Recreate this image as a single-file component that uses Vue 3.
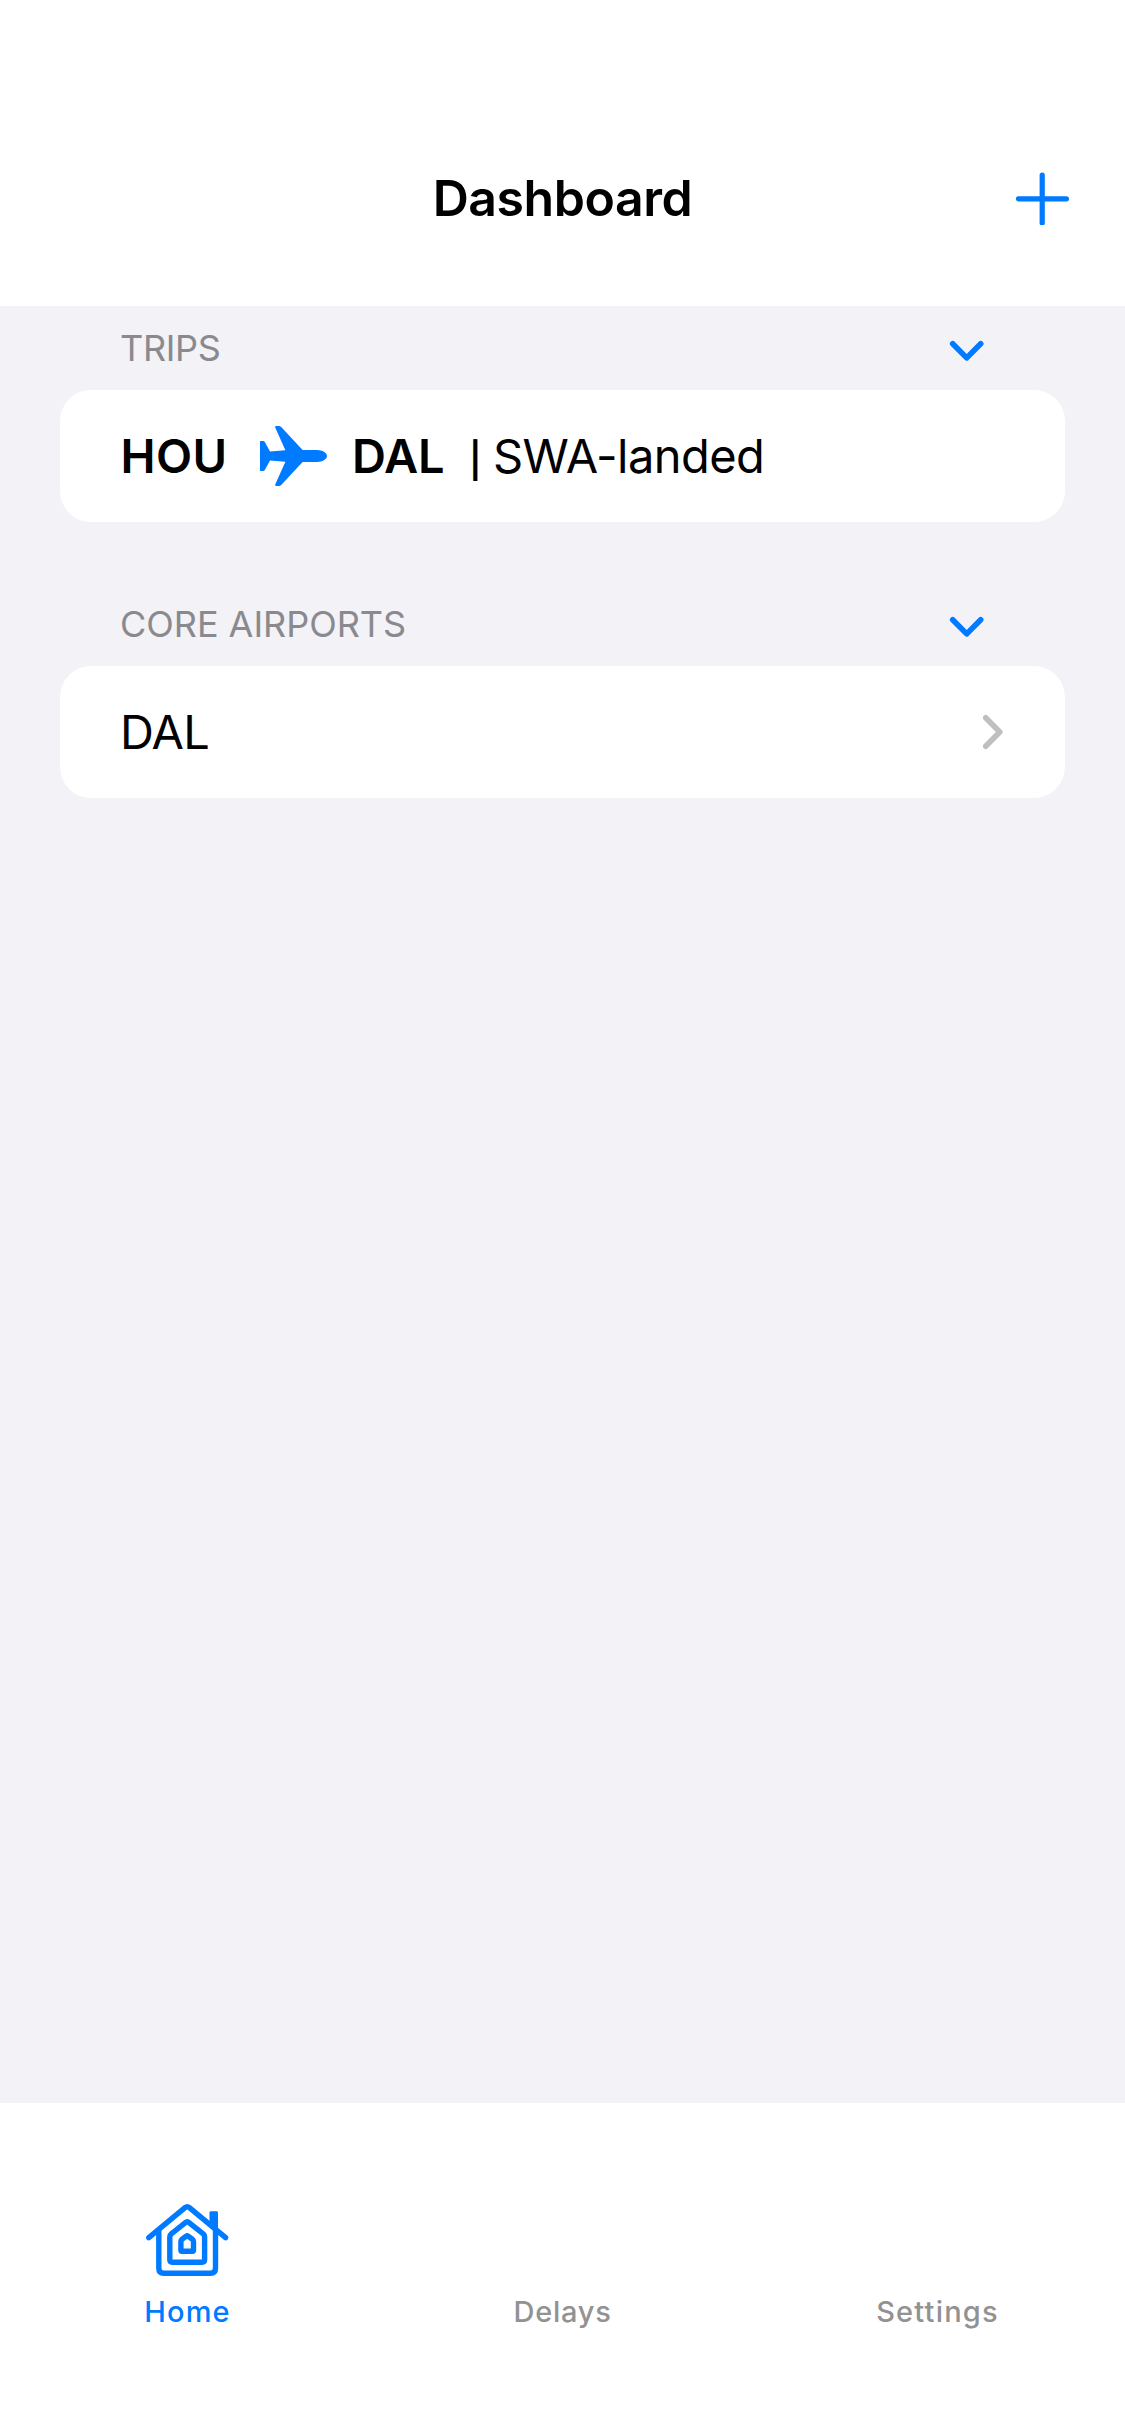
<script setup>
const tabs = [
  { id: 'home', label: 'Home', active: true },
  { id: 'delays', label: 'Delays', active: false },
  { id: 'settings', label: 'Settings', active: false },
]
</script>

<template>
  <div class="app">
    <header class="navbar">
      <span class="navbar-side"></span>
      <h1 class="title">Dashboard</h1>
      <span class="navbar-side">
        <svg class="plus" viewBox="0 0 54 54">
          <path d="M27.2 4v48M3.4 27.8h48" />
        </svg>
      </span>
    </header>

    <main class="content">
      <section class="section">
        <div class="section-head">
          <h2 class="section-title trips">TRIPS</h2>
          <svg class="chevron-down" viewBox="0 0 36 22">
            <path d="M3.7 3.7 17.7 17.9 31.7 3.7" />
          </svg>
        </div>
        <div class="card">
          <span class="code origin">HOU</span>
          <svg class="plane" viewBox="0 0 68 60">
            <path
              d="M0 15H3.2Q4.2 15 4.8 16L10 25.6 25.4 24.2 15.2 1.4Q14.6 0 16.2 0H19Q20.2 0 21.2 1L42.6 24H57C62.5 24 67 26.8 67 30S62.5 36 57 36H42.6L21.2 59Q20.2 60 19 60H16.2Q14.6 60 15.2 58.6L25.4 35.8 10 34.4 4.8 44Q4.2 45 3.2 45H0Z"
            />
          </svg>
          <span class="code destination">DAL</span>
          <span class="divider">|</span>
          <span class="status">SWA-landed</span>
        </div>
      </section>

      <section class="section">
        <div class="section-head">
          <h2 class="section-title">CORE AIRPORTS</h2>
          <svg class="chevron-down" viewBox="0 0 36 22">
            <path d="M3.7 3.7 17.7 17.9 31.7 3.7" />
          </svg>
        </div>
        <div class="card">
          <span class="airport">DAL</span>
          <svg class="chevron-right" viewBox="0 0 22 36">
            <path d="M2.7 3.8 16.8 18 2.7 32.2" />
          </svg>
        </div>
      </section>
    </main>

    <nav class="tabbar">
      <div v-for="tab in tabs" :key="tab.id" class="tab" :class="[tab.id, { active: tab.active }]">
        <div class="tab-icon">
          <svg v-if="tab.id === 'home'" class="house" viewBox="0 0 84 76">
            <path d="M3.8 35.7 40 5.6Q42.2 3.8 44.4 5.6L80.6 35.7" />
            <path d="M13.8 29V66.3Q13.8 71.3 18.8 71.3H65.5Q70.5 71.3 70.5 66.3V29" />
            <path d="M64.5 23V10.6Q64.5 9.3 65.8 9.3H71.7Q73 9.3 73 10.6V30Z" class="chimney" />
            <path d="M26.3 31.8 41 20.2Q42.2 19.2 43.4 20.2L58.2 31.8Q59.6 33 59.6 34.8V57.8Q59.6 60.2 57.2 60.2H27.2Q24.8 60.2 24.8 57.8V34.8Q24.8 33 26.3 31.8Z" />
            <path d="M37 37.2 41.2 34.2Q42.2 33.5 43.2 34.2L47.4 37.2Q48.5 38 48.5 39.4V48.3Q48.5 49.3 47.5 49.3H36.9Q35.9 49.3 35.9 48.3V39.4Q35.9 38 37 37.2Z" />
          </svg>
        </div>
        <span class="tab-label">{{ tab.label }}</span>
      </div>
    </nav>
  </div>
</template>

<style>
body {
  margin: 0;
}
</style>

<style scoped>
.app {
  display: flex;
  flex-direction: column;
  width: 1125px;
  height: 2436px;
  background: #f2f2f7;
  color: #000;
  font-family: Inter, "Liberation Sans", sans-serif;
}

.navbar {
  display: flex;
  align-items: center;
  justify-content: space-between;
  box-sizing: border-box;
  height: 306px;
  padding: 90px 56px 0;
  background: #fff;
}

.navbar-side {
  display: flex;
  justify-content: flex-end;
  width: 120px;
}

.title {
  margin: 0;
  font-size: 50px;
  font-weight: 600;
  line-height: 60px;
  letter-spacing: -0.44px;
}

.plus {
  width: 54px;
  height: 54px;
  fill: none;
  stroke: #007aff;
  stroke-width: 5.2;
  stroke-linecap: round;
}

.content {
  flex: 1;
  padding: 0 60px;
}

.section {
  margin-bottom: 60px;
}

.section-head {
  display: flex;
  align-items: center;
  justify-content: space-between;
  height: 84px;
  padding: 0 80px 0 60px;
}

.section-title {
  margin: 0;
  color: #8a898e;
  font-size: 36px;
  font-weight: 400;
  line-height: 44px;
  letter-spacing: -0.03px;
}

.section-title.trips {
  letter-spacing: -0.35px;
}

.chevron-down {
  width: 36px;
  height: 22px;
  margin-top: 6px;
  fill: none;
  stroke: #007aff;
  stroke-width: 5.6;
  stroke-linecap: round;
  stroke-linejoin: round;
}

.card {
  display: flex;
  align-items: center;
  box-sizing: border-box;
  height: 132px;
  padding: 0 60px;
  border-radius: 31px;
  background: #fff;
  font-size: 47px;
  line-height: 60px;
  white-space: nowrap;
}

.code {
  font-weight: 600;
}

.origin {
  width: 139.5px;
  padding-left: 0.5px;
  letter-spacing: 0.4px;
}

.plane {
  width: 68px;
  height: 60px;
  fill: #007aff;
}

.destination {
  width: 117px;
  margin-left: 24px;
  letter-spacing: -0.1px;
}

.divider {
  width: 24px;
  padding-top: 8px;
  font-size: 35px;
  font-weight: 600;
}

.status {
  letter-spacing: -0.55px;
}

.airport {
  flex: 1;
  letter-spacing: -0.8px;
}

.chevron-right {
  width: 22px;
  height: 36px;
  fill: none;
  stroke: #bfbfbf;
  stroke-width: 5.6;
  stroke-linecap: round;
  stroke-linejoin: round;
}

.tabbar {
  display: flex;
  height: 333px;
  background: #fff;
}

.tab {
  display: flex;
  flex: 1;
  flex-direction: column;
  align-items: center;
  color: #929292;
}

.tab.active {
  color: #007aff;
}

.tab-icon {
  height: 76px;
  margin-top: 99px;
}

.house {
  display: block;
  width: 84px;
  height: 76px;
  margin-right: 2px;
  fill: none;
  stroke: currentColor;
  stroke-width: 5.4;
  stroke-linecap: round;
  stroke-linejoin: round;
}

.house .chimney {
  fill: currentColor;
  stroke: none;
}

.tab-label {
  margin-top: 16px;
  font-size: 29px;
  font-weight: 500;
  line-height: 36px;
  letter-spacing: 1.2px;
}

.delays .tab-label {
  letter-spacing: 0.75px;
}
</style>
